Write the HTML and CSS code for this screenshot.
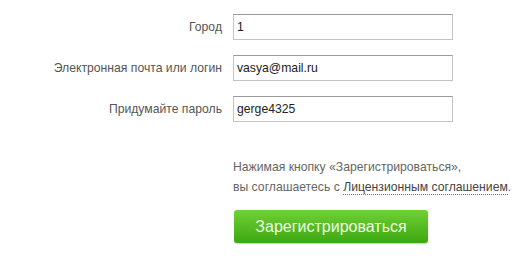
FILE: index.html
```html
<!DOCTYPE html>
<html lang="ru">
<head>
<meta charset="utf-8">
<link rel="stylesheet" href="styles.css">
</head>
<body>
<div class="page">
  <form class="form">
    <div class="row">
      <label class="label">Город</label>
      <div class="input">1</div>
    </div>
    <div class="row">
      <label class="label">Электронная почта или логин</label>
      <div class="input">vasya@mail.ru</div>
    </div>
    <div class="row">
      <label class="label">Придумайте пароль</label>
      <div class="input">gerge4325</div>
    </div>
    <div class="row agree-row">
      <span></span>
      <p class="agree">Нажимая кнопку «Зарегистрироваться»,<br>вы соглашаетесь с <a class="link">Лицензионным соглашением</a>.</p>
    </div>
    <div class="row btn-row">
      <span></span>
      <div><button type="button" class="btn">Зарегистрироваться</button></div>
    </div>
  </form>
</div>
</body>
</html>
```

FILE: styles.css
```css
html, body {
  margin: 0;
  padding: 0;
  background: #fff;
}
.page {
  width: 527px;
  height: 265px;
  overflow: hidden;
  font-family: "Liberation Sans", Arial, sans-serif;
  font-size: 12.2px;
  color: #555;
}
.form {
  display: flex;
  flex-direction: column;
  gap: 15px;
  padding-top: 14px;
}
.row {
  display: grid;
  grid-template-columns: 222px 220px;
  column-gap: 11px;
  align-items: center;
}
.label {
  text-align: right;
  color: #555;
}
.input {
  box-sizing: border-box;
  height: 26px;
  border: 1px solid #c4c4c4;
  border-top-color: #9a9a9a;
  padding: 0 3px;
  line-height: 24px;
  font-size: 12.2px;
  color: #222;
}
.agree-row {
  margin-top: 20px;
}
.agree {
  margin: 0;
  line-height: 20px;
  color: #666;
  white-space: nowrap;
}
.link {
  color: #444;
  text-decoration: none;
  border-bottom: 1px dotted #777;
}
.btn-row {
  margin-top: -2px;
}
.btn {
  display: block;
  width: 194px;
  height: 33px;
  margin-left: 1px;
  border: 0;
  border-radius: 3px;
  background: linear-gradient(#6fd134, #3da711);
  box-shadow: 0 1px 1px rgba(0,0,0,0.2);
  color: #eefbe4;
  font-family: "Liberation Sans", Arial, sans-serif;
  font-size: 16px;
  padding: 0;
}
```
